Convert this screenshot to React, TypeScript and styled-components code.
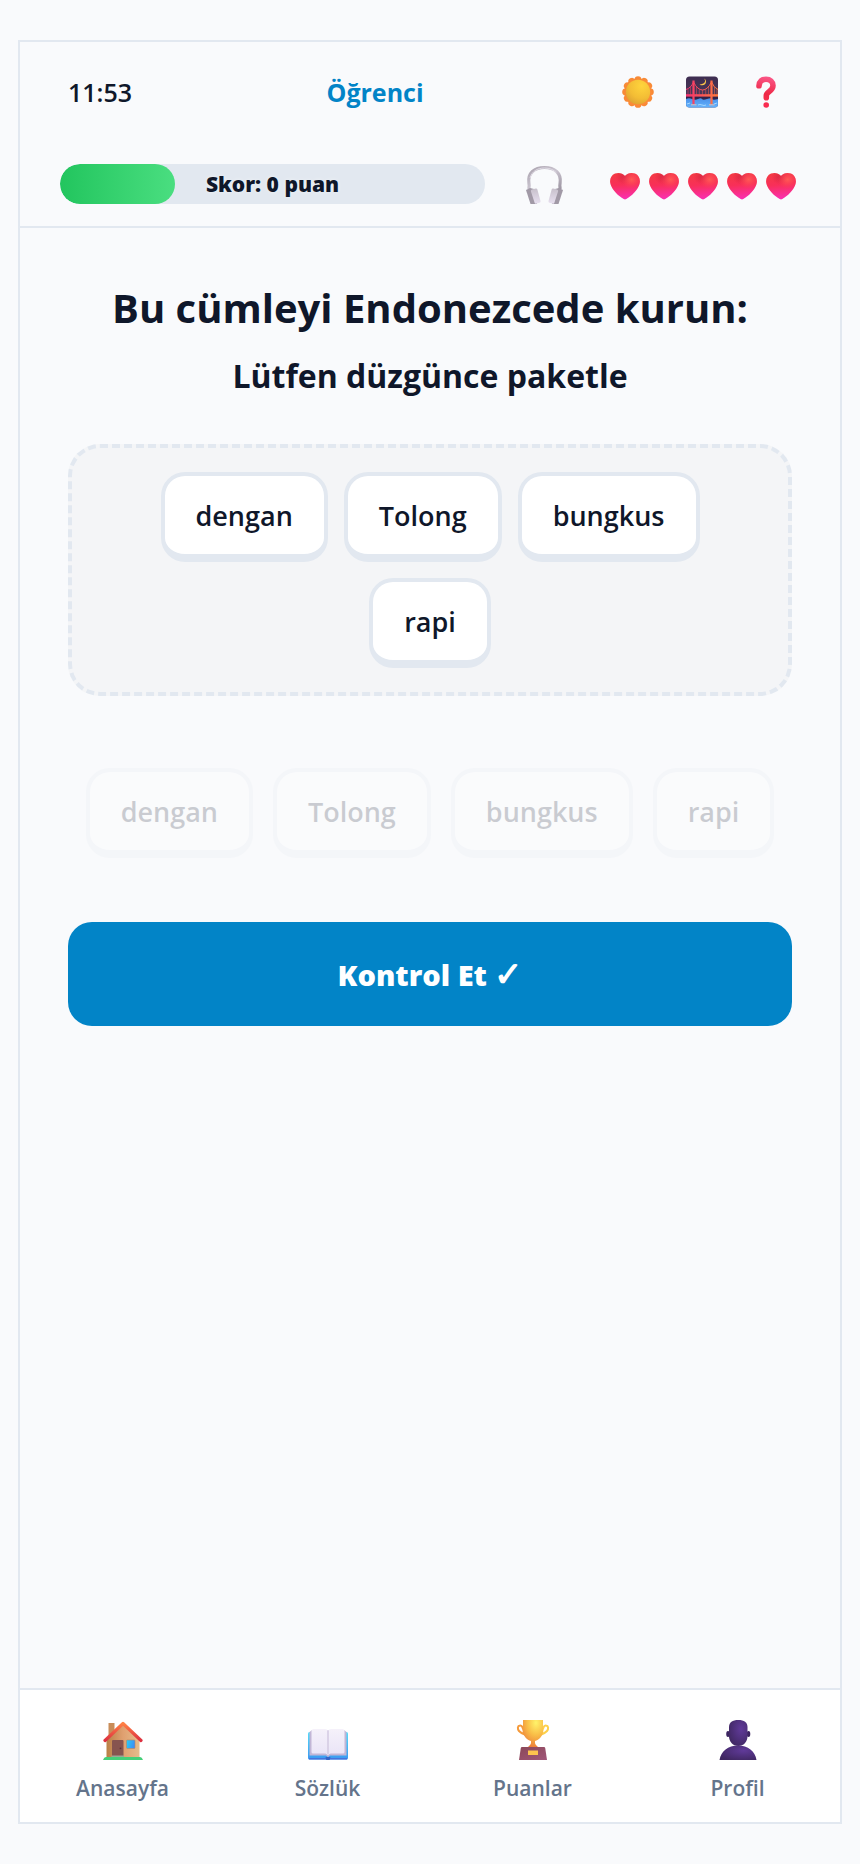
import { useState } from "react";
import styled, { createGlobalStyle } from "styled-components";

const colors = {
  background: "#f9fafc",
  surface: "#ffffff",
  zone: "#f4f5f7",
  border: "#e2e8f0",
  text: "#0f172a",
  muted: "#64748b",
  primary: "#0284c7",
};

const GlobalStyle = createGlobalStyle`
  * {
    box-sizing: border-box;
  }

  body {
    margin: 0;
    background: ${colors.background};
    color: ${colors.text};
    font-family: "Segoe UI", "Open Sans", "Noto Sans", sans-serif;
  }

  button {
    font-family: inherit;
    color: inherit;
    cursor: pointer;
  }

  svg {
    display: block;
  }
`;

const Page = styled.div`
  min-height: 100vh;
  padding: 40px 18px;
  display: flex;
`;

const Frame = styled.div`
  flex: 1;
  min-width: 0;
  display: flex;
  flex-direction: column;
  border: 2px solid ${colors.border};
`;

const Header = styled.header`
  padding: 30px 40px 22px;
  display: flex;
  flex-direction: column;
  gap: 52px;
  border-bottom: 2px solid ${colors.border};
`;

const TopRow = styled.div`
  height: 40px;
  padding: 0 14px 0 8px;
  display: flex;
  align-items: center;
  justify-content: space-between;
`;

const Clock = styled.time`
  font-size: 25px;
  font-weight: 600;
`;

const UserName = styled.span`
  font-size: 25px;
  font-weight: 700;
  color: ${colors.primary};
`;

const Actions = styled.div`
  display: flex;
  gap: 24px;
`;

const IconButton = styled.button`
  width: 40px;
  height: 40px;
  padding: 0;
  border: none;
  background: none;
  display: flex;
  align-items: center;
  justify-content: center;
`;

const StatusRow = styled.div`
  display: flex;
  align-items: center;
  gap: 40px;
`;

const ScoreBar = styled.div`
  flex: 1;
  height: 40px;
  display: grid;
  align-items: center;
  border-radius: 20px;
  overflow: hidden;
  background: ${colors.border};

  > * {
    grid-area: 1 / 1;
  }
`;

const ScoreFill = styled.div`
  height: 40px;
  border-radius: 20px;
  background: linear-gradient(90deg, #22c55e, #4ade80);
`;

const ScoreText = styled.span`
  text-align: center;
  font-size: 21px;
  font-weight: 800;
  text-shadow: 0 0 4px rgba(255, 255, 255, 0.5);
`;

const Hearts = styled.div`
  display: flex;
  padding-top: 4px;
`;

const HeartSlot = styled.span`
  width: 39px;
  display: flex;
  justify-content: center;
`;

const Content = styled.main`
  flex: 1;
  padding: 48px;
  display: flex;
  flex-direction: column;
`;

const Title = styled.h1`
  margin: 0;
  font-size: 40px;
  line-height: 64px;
  font-weight: 700;
  text-align: center;
`;

const Sentence = styled.h2`
  margin: 16px 0 48px;
  font-size: 32px;
  line-height: 40px;
  font-weight: 700;
  text-align: center;
`;

const AnswerZone = styled.section`
  min-height: 252px;
  padding: 24px;
  display: flex;
  flex-wrap: wrap;
  align-content: flex-start;
  justify-content: center;
  gap: 16px;
  border: 4px dashed ${colors.border};
  border-radius: 32px;
  background: ${colors.zone};
`;

const WordBank = styled.section`
  margin: 72px 0 64px;
  display: flex;
  flex-wrap: wrap;
  justify-content: center;
  gap: 20px;
`;

const Word = styled.button<{ $used?: boolean }>`
  padding: 21px 31px 19px;
  border: 4px solid ${colors.border};
  border-bottom-width: 8px;
  border-radius: 24px;
  background: ${colors.surface};
  font-size: 27px;
  line-height: 38px;
  font-weight: 600;
  opacity: ${(props) => (props.$used ? 0.2 : 1)};
`;

const CheckButton = styled.button`
  height: 104px;
  border: none;
  border-radius: 24px;
  background: ${colors.primary};
  color: #fff;
  font-size: 29px;
  font-weight: 800;
`;

const CheckMark = styled.span`
  font-size: 34px;
  line-height: 1px;
`;

const BottomNav = styled.nav`
  padding: 30px 0 20px;
  display: grid;
  grid-template-columns: repeat(4, 1fr);
  border-top: 2px solid ${colors.border};
  background: ${colors.surface};
`;

const NavItem = styled.a`
  display: flex;
  flex-direction: column;
  align-items: center;
  gap: 14px;
  font-size: 21px;
  line-height: 28px;
  font-weight: 600;
  color: ${colors.muted};
  text-decoration: none;
`;

function SunIcon() {
  return (
    <svg width="32" height="32" viewBox="0 0 32 32" aria-hidden="true">
      <defs>
        <linearGradient id="sunRay" x1="0" y1="0" x2="1" y2="1">
          <stop offset="0" stopColor="#f58a35" />
          <stop offset="1" stopColor="#ff8a3a" />
        </linearGradient>
        <radialGradient id="sunFace" cx="0.65" cy="0.25" r="0.85">
          <stop offset="0" stopColor="#ffd43c" />
          <stop offset="0.6" stopColor="#f3bd35" />
          <stop offset="1" stopColor="#dca032" />
        </radialGradient>
      </defs>
      <g fill="url(#sunRay)">
        {Array.from({ length: 12 }, (_, i) => (
          <circle key={i} cx="16" cy="3.600" r="3.400" transform={`rotate(${i * 30} 16 16)`} />
        ))}
        <circle cx="16" cy="16" r="13.800" />
      </g>
      <circle cx="16" cy="16" r="12.200" fill="url(#sunFace)" />
    </svg>
  );
}

function BridgeIcon() {
  return (
    <svg width="32" height="32" viewBox="0 0 32 32" aria-hidden="true">
      <defs>
        <linearGradient id="bridgeSky" x1="0" y1="0" x2="0" y2="1">
          <stop offset="0" stopColor="#3d2c50" />
          <stop offset="1" stopColor="#56405f" />
        </linearGradient>
        <linearGradient id="bridgeRed" x1="0" y1="0" x2="32" y2="0" gradientUnits="userSpaceOnUse">
          <stop offset="0" stopColor="#f5316f" />
          <stop offset="1" stopColor="#ff7a3c" />
        </linearGradient>
        <linearGradient id="bridgeWater" x1="0" y1="0" x2="0" y2="1">
          <stop offset="0" stopColor="#4a8fe8" />
          <stop offset="1" stopColor="#65b5ff" />
        </linearGradient>
        <clipPath id="bridgeClip">
          <rect x="0" y="0.500" width="32" height="31" rx="3.500" />
        </clipPath>
      </defs>
      <g clipPath="url(#bridgeClip)">
        <rect width="32" height="32" fill="url(#bridgeSky)" />
        <path d="M0 20h32v4H0z" fill="#32234a" />
        <path d="M0 23q3-1.500 6 0t6 0 4 0 5 0 5 0 6 0v9H0z" fill="url(#bridgeWater)" />
        <path d="M12 29q2-1 4 0t4 0M1 28l3-1M28 28l3-1" stroke="#a3d6ff" fill="none" />
        <path d="M18 2.500c2.400 2.800.6 5.800-4.500 6 3 2 6.800.2 6.500-3.200-.1-1.300-1-2.300-2-2.800z" fill="#ffc84a" />
        <g stroke="url(#bridgeRed)" fill="none">
          <path d="M0 13.500Q5 12 7.500 6q4 8 9 8t9-8q2.500 6 6.500 7.500" strokeWidth="1" />
          <path
            d="M2 13v6M4.500 11v8M10.500 11v8M13.300 13.500v5M16.500 14v5M19.700 13.500v5M22.500 11v8M28.500 11v8M31 13v6"
            strokeWidth="0.700"
            opacity="0.700"
          />
          <path d="M7.500 4.500v24M25.500 4.500v24" strokeWidth="2.200" />
        </g>
        <rect y="18.200" width="32" height="2.400" fill="url(#bridgeRed)" />
        <path d="M5 28h5.500v1.500H5zM23 28h5.500v1.500H23z" fill="#b9b6c8" />
      </g>
    </svg>
  );
}

function QuestionIcon() {
  return (
    <svg width="20" height="32" viewBox="0 0 20 32" aria-hidden="true">
      <defs>
        <linearGradient id="question" x1="14" y1="0" x2="8" y2="30" gradientUnits="userSpaceOnUse">
          <stop offset="0" stopColor="#fb5a8c" />
          <stop offset="0.600" stopColor="#ee2846" />
          <stop offset="1" stopColor="#ff3350" />
        </linearGradient>
      </defs>
      <path
        d="M3 9.800C3.200 5.500 6 3.200 10 3.200c4.200 0 7 2.600 7 6.300 0 3-1.800 4.600-4 6.200-2 1.400-2.700 2.300-2.700 4v2"
        stroke="url(#question)"
        strokeWidth="5.600"
        strokeLinecap="round"
        fill="none"
      />
      <circle cx="10.200" cy="29" r="2.800" fill="#f92c50" />
    </svg>
  );
}

function HeadphonesIcon() {
  return (
    <svg width="38" height="40" viewBox="0 0 38 40" aria-hidden="true">
      <defs>
        <linearGradient id="phoneBand" x1="0" y1="0" x2="1" y2="1">
          <stop offset="0" stopColor="#aaa2ae" />
          <stop offset="0.500" stopColor="#cbc5d0" />
          <stop offset="1" stopColor="#9e96a3" />
        </linearGradient>
        <linearGradient id="phonePad" x1="0" y1="0" x2="0" y2="1">
          <stop offset="0" stopColor="#c7c0cb" />
          <stop offset="1" stopColor="#e8e0f0" />
        </linearGradient>
      </defs>
      <path
        d="M3 25v-2c.4-1 .2-2-.1-4C1.500 9 8.500 3.500 18.500 3.500S35.500 9 34.100 19c-.3 2-.5 3-.1 4v2"
        stroke="url(#phoneBand)"
        strokeWidth="3.200"
        fill="none"
      />
      <path d="M4 14C6 7.500 11 4 18.500 4c5 0 9 1.500 12 5" stroke="#e2dde7" fill="none" />
      <path d="M0 26l4-2 4 1 3 15H4.500z" fill="#a199a6" />
      <path d="M37 26l-4-2-4 1-3 15h6.500z" fill="#a199a6" />
      <path d="M4.800 27q0-1 1-1.500l4-1q1.200-.2 1.500.8L14.500 37q.2 1.500-1 1.800L10 39.800q-1 .2-1.300-.8z" fill="url(#phonePad)" />
      <path d="M32.200 27q0-1-1-1.500l-4-1q-1.200-.2-1.500.8L22.500 37q-.2 1.500 1 1.800l3.500 1q1 .2 1.300-.8z" fill="url(#phonePad)" />
    </svg>
  );
}

function HeartIcon() {
  return (
    <svg width="30" height="28" viewBox="0 0 30 28" aria-hidden="true">
      <defs>
        <linearGradient id="heartBase" x1="0.400" y1="0" x2="0.500" y2="1">
          <stop offset="0" stopColor="#f43a43" />
          <stop offset="0.450" stopColor="#f82f59" />
          <stop offset="1" stopColor="#fa2fb4" />
        </linearGradient>
        <radialGradient id="heartGlow" cx="0.720" cy="0.250" r="0.350">
          <stop offset="0" stopColor="#ff5a55" />
          <stop offset="1" stopColor="#ff4058" stopOpacity="0" />
        </radialGradient>
        <radialGradient id="heartShade" cx="0.480" cy="0.150" r="0.300">
          <stop offset="0" stopColor="#c91f3e" stopOpacity="0.700" />
          <stop offset="1" stopColor="#d8203e" stopOpacity="0" />
        </radialGradient>
      </defs>
      {["heartBase", "heartShade", "heartGlow"].map((fill) => (
        <path
          key={fill}
          d="M15 4C12.500 1 8.500.2 5 1.600.8 3.400-.8 8 .5 12.200 2.400 18.300 8.500 24 13.700 27c.9.500 1.700.5 2.600 0C21.500 24 27.600 18.300 29.500 12.200 30.800 8 29.200 3.400 25 1.600 21.500.2 17.500 1 15 4z"
          fill={`url(#${fill})`}
        />
      ))}
    </svg>
  );
}

function HouseIcon() {
  return (
    <svg width="40" height="40" viewBox="0 0 40 40" aria-hidden="true">
      <defs>
        <linearGradient id="houseWall" x1="0" y1="0" x2="1" y2="0">
          <stop offset="0" stopColor="#b98046" />
          <stop offset="0.500" stopColor="#e0a070" />
          <stop offset="1" stopColor="#e5bd8b" />
        </linearGradient>
        <linearGradient id="houseRoof" x1="0" y1="0" x2="0" y2="1">
          <stop offset="0" stopColor="#ff8145" />
          <stop offset="1" stopColor="#dd3040" />
        </linearGradient>
        <linearGradient id="houseWindow" x1="0" y1="0" x2="1" y2="0.300">
          <stop offset="0" stopColor="#27d0f5" />
          <stop offset="1" stopColor="#3b90f5" />
        </linearGradient>
      </defs>
      <path d="M5.500 3h6v14h-6z" fill="#c98d59" />
      <path d="M3.500 20L20 5l16.500 15v18h-33z" fill="url(#houseWall)" />
      <path
        d="M2 20.500L20 3.500l18 17"
        stroke="url(#houseRoof)"
        strokeWidth="3.200"
        strokeLinecap="round"
        strokeLinejoin="round"
        fill="none"
      />
      <rect x="9" y="20" width="11.500" height="17" rx="1" fill="#86544f" />
      <circle cx="17.500" cy="28.300" r="0.900" fill="#5b3134" />
      <rect x="23.500" y="20" width="8.500" height="8.500" rx="0.800" fill="url(#houseWindow)" stroke="#b98560" strokeWidth="0.600" />
      <path d="M8.500 35.500H21V37H8.500z" fill="#9aa896" />
      <path d="M3 37h34q2 0 3 3H0q1-3 3-3z" fill="#45cf78" />
    </svg>
  );
}

function BookIcon() {
  return (
    <svg width="40" height="40" viewBox="0 0 40 40" aria-hidden="true">
      <defs>
        <linearGradient id="bookCover" x1="0" y1="0" x2="0" y2="1">
          <stop offset="0" stopColor="#56dcfa" />
          <stop offset="1" stopColor="#3a98f0" />
        </linearGradient>
        <linearGradient id="bookPage" x1="0" y1="0" x2="0" y2="1">
          <stop offset="0" stopColor="#f5f1fa" />
          <stop offset="1" stopColor="#eae4f7" />
        </linearGradient>
      </defs>
      <rect x="0" y="12" width="40" height="27.500" rx="1.500" fill="url(#bookCover)" />
      <path d="M1 38h38v1.500H1z" fill="#4773db" />
      <path d="M17.500 37h5l-1 3.500h-3z" fill="#3566c9" />
      <path d="M1.500 12l2.500-2h32l2.500 2v23.500H22L20 37l-2-1.500H1.500z" fill="#c2b6d6" />
      <path
        d="M3.500 10.500Q4 9 5.500 9H17q2.500 0 3 2 .5-2 3-2h11.500q1.500 0 2 1.500V32q0 1.500-1.500 1.500H22.500L20 35l-2.500-1.500H5Q3.500 33.500 3.500 32z"
        fill="url(#bookPage)"
      />
      <path d="M20 11v23" stroke="#d3cae2" strokeWidth="1.500" />
    </svg>
  );
}

function TrophyIcon() {
  return (
    <svg width="34" height="40" viewBox="0 0 34 40" aria-hidden="true">
      <defs>
        <radialGradient id="trophyCup" cx="0.650" cy="0.100" r="0.900">
          <stop offset="0" stopColor="#fff36a" />
          <stop offset="0.500" stopColor="#f9bd47" />
          <stop offset="1" stopColor="#ec7d39" />
        </radialGradient>
        <linearGradient id="trophyBase" x1="0" y1="0" x2="1" y2="1">
          <stop offset="0" stopColor="#8b4858" />
          <stop offset="1" stopColor="#a1577a" />
        </linearGradient>
      </defs>
      <path d="M8 13C7 6.500 5.500 5 3.700 5.500 1.500 6 1.300 9 3 11s4.500 3 7 4" stroke="#f59a3a" strokeWidth="2" fill="none" />
      <path d="M26 13c1-6.500 2.500-8 4.300-7.500 2.200.5 2.400 3.500.7 5.500s-4.500 3-7 4" stroke="#fdd04b" strokeWidth="2" fill="none" />
      <path d="M7 0h20v11c0 5-4 9-8 10v2c0 2 2.500 3 4 5H11c1.500-2 4-3 4-5v-2c-4-1-8-5-8-10z" fill="url(#trophyCup)" />
      <path d="M6 27h22q1 0 1.200 1L31 40H3l1.800-12Q5 27 6 27z" fill="url(#trophyBase)" />
      <rect x="12" y="30.500" width="10" height="4.500" fill="#fcc34e" />
    </svg>
  );
}

function ProfileIcon() {
  return (
    <svg width="38" height="40" viewBox="0 0 38 40" aria-hidden="true">
      <defs>
        <radialGradient id="profile" cx="0.650" cy="0.350" r="0.750">
          <stop offset="0" stopColor="#603a99" />
          <stop offset="1" stopColor="#3f2761" />
        </radialGradient>
      </defs>
      <ellipse cx="9" cy="14" rx="1.800" ry="3" fill="#3c2460" />
      <ellipse cx="29.500" cy="14" rx="1.800" ry="3" fill="#3c2460" />
      <path d="M10 7c0-4.500 3.500-7 9.300-7s9.200 2.500 9.200 7v9c0 6-4 10-9.200 10S10 22 10 16z" fill="url(#profile)" />
      <path d="M.5 40C2 31 9 25.500 19 25.500S36 31 37.500 40z" fill="url(#profile)" />
    </svg>
  );
}

const words = ["dengan", "Tolong", "bungkus", "rapi"];

const navItems = [
  { label: "Anasayfa", href: "#anasayfa", icon: <HouseIcon /> },
  { label: "Sözlük", href: "#sozluk", icon: <BookIcon /> },
  { label: "Puanlar", href: "#puanlar", icon: <TrophyIcon /> },
  { label: "Profil", href: "#profil", icon: <ProfileIcon /> },
];

function App() {
  const [answer, setAnswer] = useState<string[]>(words);
  const score = 0;
  const lives = 5;
  const progress = 27;

  return (
    <Page>
      <GlobalStyle />
      <Frame>
        <Header>
          <TopRow>
            <Clock>11:53</Clock>
            <UserName>Öğrenci</UserName>
            <Actions>
              <IconButton type="button" aria-label="Açık tema">
                <SunIcon />
              </IconButton>
              <IconButton type="button" aria-label="Gece teması">
                <BridgeIcon />
              </IconButton>
              <IconButton type="button" aria-label="Yardım">
                <QuestionIcon />
              </IconButton>
            </Actions>
          </TopRow>
          <StatusRow>
            <ScoreBar>
              <ScoreFill style={{ width: `${progress}%` }} />
              <ScoreText>Skor: {score} puan</ScoreText>
            </ScoreBar>
            <IconButton type="button" aria-label="Dinle">
              <HeadphonesIcon />
            </IconButton>
            <Hearts>
              {Array.from({ length: lives }, (_, i) => (
                <HeartSlot key={i}>
                  <HeartIcon />
                </HeartSlot>
              ))}
            </Hearts>
          </StatusRow>
        </Header>

        <Content>
          <Title>Bu cümleyi Endonezcede kurun:</Title>
          <Sentence>Lütfen düzgünce paketle</Sentence>
          <AnswerZone>
            {answer.map((word) => (
              <Word key={word} type="button" onClick={() => setAnswer(answer.filter((w) => w !== word))}>
                {word}
              </Word>
            ))}
          </AnswerZone>
          <WordBank>
            {words.map((word) => (
              <Word
                key={word}
                type="button"
                $used={answer.includes(word)}
                disabled={answer.includes(word)}
                onClick={() => setAnswer([...answer, word])}
              >
                {word}
              </Word>
            ))}
          </WordBank>
          <CheckButton type="button">
            Kontrol Et <CheckMark>✓</CheckMark>
          </CheckButton>
        </Content>

        <BottomNav>
          {navItems.map((item) => (
            <NavItem key={item.label} href={item.href}>
              {item.icon}
              {item.label}
            </NavItem>
          ))}
        </BottomNav>
      </Frame>
    </Page>
  );
}

export default App;
